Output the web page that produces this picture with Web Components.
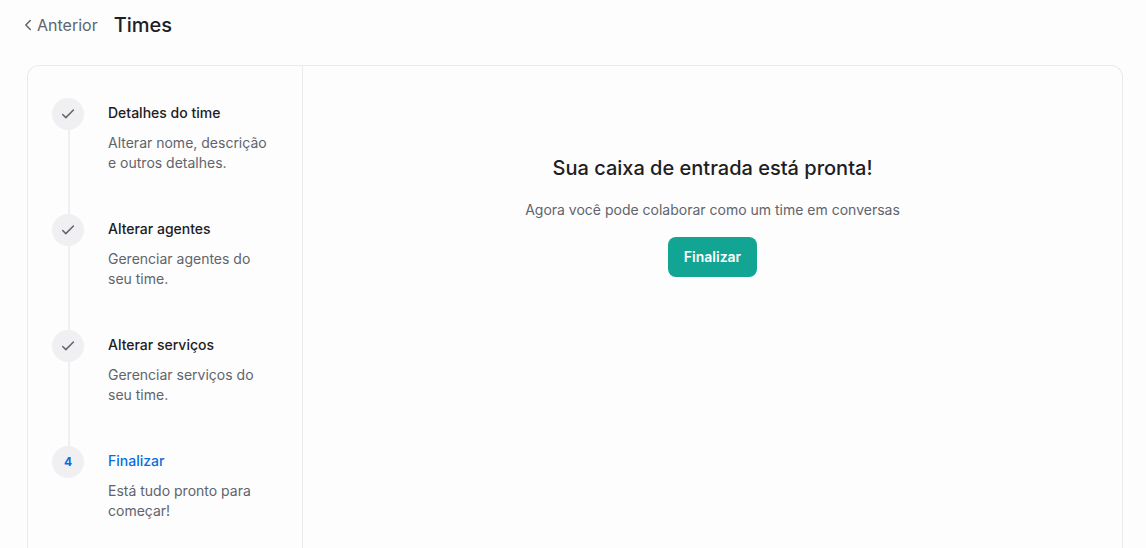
<!DOCTYPE html>
<html lang="pt-BR">
<head>
<meta charset="utf-8">
<meta name="viewport" content="width=device-width, initial-scale=1">
<title>Times</title>
<style>
  body {
    margin: 0;
    background: #fdfdfd;
    color: #1c2024;
    font-family: Inter, "Liberation Sans", sans-serif;
    font-size: 14px;
    line-height: 20px;
    --muted: #60646c;
    --line: #eaeaea;
    --bubble: #f0f0f3;
    --link: #086de0;
    --brand: #12a594;
  }
</style>
</head>
<body>
<team-page>
  <page-header slot="header" back="Anterior">Times</page-header>
  <wizard-steps slot="steps">
    <wizard-step done>Detalhes do time<span slot="body">Alterar nome, descrição e outros detalhes.</span></wizard-step>
    <wizard-step done>Alterar agentes<span slot="body">Gerenciar agentes do seu time.</span></wizard-step>
    <wizard-step done>Alterar serviços<span slot="body">Gerenciar serviços do seu time.</span></wizard-step>
    <wizard-step number="4" active>Finalizar<span slot="body">Está tudo pronto para começar!</span></wizard-step>
  </wizard-steps>
  <empty-state>
    Sua caixa de entrada está pronta!
    <span slot="message">Agora você pode colaborar como um time em conversas</span>
    <action-button slot="action">Finalizar</action-button>
  </empty-state>
</team-page>
<script>
  const define = (name, markup, setup) => {
    const template = document.createElement('template');
    template.innerHTML = markup;
    customElements.define(name, class extends HTMLElement {
      constructor() {
        super();
        this.attachShadow({ mode: 'open' }).append(template.content.cloneNode(true));
      }
      connectedCallback() {
        if (setup) setup(this, this.shadowRoot);
      }
    });
  };

  define('team-page', `
    <style>
      :host { display: flex; flex-direction: column; box-sizing: border-box; min-height: 100vh; }
      main { flex: 1 0 auto; display: grid; grid-template-columns: 275px 1fr; margin: 15px 23px 0 27px;
        border: 1px solid var(--line); border-bottom: 0; border-radius: 12px 12px 0 0; }
      aside { border-right: 1px solid var(--line); box-sizing: border-box; padding: 32px 24px 0; }
    </style>
    <slot name="header"></slot>
    <main><aside><slot name="steps"></slot></aside><section><slot></slot></section></main>
  `);

  define('page-header', `
    <style>
      :host { display: flex; flex: none; align-items: center; gap: 16px; height: 50px; padding: 0 24px; }
      a { display: flex; align-items: center; gap: 5px; color: var(--muted); font-size: 16px; line-height: 24px; text-decoration: none; }
      svg { display: block; width: 8px; height: 12px; }
      h1 { margin: 0; font-size: 20px; line-height: 28px; font-weight: 500; }
    </style>
    <a href="#"><svg viewBox="0 0 8 12" fill="none" stroke="currentColor" stroke-width="1.5" stroke-linecap="round" stroke-linejoin="round" aria-hidden="true"><path d="M6.3 1.5 1.8 6l4.5 4.5"/></svg><span></span></a>
    <h1><slot></slot></h1>
  `, (host, root) => { root.querySelector('span').textContent = host.getAttribute('back'); });

  define('wizard-steps', `
    <style>:host { display: block; }</style>
    <slot></slot>
  `);

  define('wizard-step', `
    <style>
      :host { display: grid; grid-template-columns: 32px 1fr; column-gap: 24px; }
      .rail { display: flex; flex-direction: column; align-items: center; }
      .bubble { display: flex; align-items: center; justify-content: center; width: 32px; height: 32px;
        border-radius: 50%; background: var(--bubble); color: var(--muted); font-size: 12px; line-height: 16px; font-weight: 700; }
      .rail::after { content: ""; flex: 1; width: 2px; margin-left: 2px; background: var(--bubble); }
      :host([active]) .rail::after { display: none; }
      :host([active]) .bubble, :host([active]) h2 { color: var(--link); }
      .text { padding: 5px 0 41px; }
      :host([active]) .text { padding-bottom: 0; }
      h2 { margin: 0 0 10px; font-size: 14px; line-height: 20px; font-weight: 500; }
      p { margin: 0; color: var(--muted); }
      svg { width: 16px; height: 16px; }
    </style>
    <div class="rail"><div class="bubble"></div></div>
    <div class="text"><h2><slot></slot></h2><p><slot name="body"></slot></p></div>
  `, (host, root) => {
    const bubble = root.querySelector('.bubble');
    if (host.hasAttribute('done')) {
      bubble.innerHTML = '<svg viewBox="0 0 16 16" fill="none" stroke="currentColor" stroke-width="1.5" stroke-linecap="round" stroke-linejoin="round" aria-hidden="true"><path d="M2.7 8.5 5.8 11.6 13.4 4"/></svg>';
    } else {
      bubble.textContent = host.getAttribute('number');
    }
  });

  define('empty-state', `
    <style>
      :host { display: flex; flex-direction: column; align-items: center; padding: 88px 24px 0; text-align: center; }
      h2 { margin: 0; font-size: 20px; line-height: 28px; font-weight: 500; }
      p { margin: 18px 0 17px; color: var(--muted); }
    </style>
    <h2><slot></slot></h2>
    <p><slot name="message"></slot></p>
    <slot name="action"></slot>
  `);

  define('action-button', `
    <style>
      :host { display: block; }
      button { display: block; height: 40px; padding: 0 16px; border: 0; border-radius: 8px; background: var(--brand);
        color: #fff; font: inherit; font-weight: 600; cursor: pointer; }
    </style>
    <button type="button"><slot></slot></button>
  `);
</script>
</body>
</html>
